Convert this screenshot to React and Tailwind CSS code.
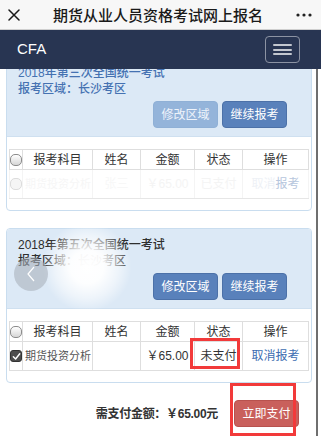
import React from "react";

function BoxCheck({ checked }) {
  if (checked) {
    return (
      <span className="mx-auto flex h-[12px] w-[12px] items-center justify-center rounded-[3px] border border-[#333] bg-[#4d4d4d]">
        <svg width="9" height="9" viewBox="0 0 10 10">
          <path d="M1.5 5.2 L4 7.8 L8.6 2" fill="none" stroke="#fff" strokeWidth="1.6" strokeLinecap="round" strokeLinejoin="round" />
        </svg>
      </span>
    );
  }
  return <span className="mx-auto block h-[12px] w-[12px] rounded-[5px] border border-[#8c8c8c] bg-linear-to-b from-white to-[#d6d6d6]" />;
}

function Table({ faded }) {
  const th = "border border-[#dedede] p-0 font-normal text-[#333] text-center";
  const td = faded
    ? "border-y border-[#e6e6e6] border-x border-x-[#f4f4f4] p-0 text-center"
    : "border border-[#dedede] p-0 text-center";
  return (
    <table className="w-[299px] table-fixed border-collapse text-[12px] leading-none">
      <colgroup>
        <col className="w-[13px]" />
        <col className="w-[70px]" />
        <col className="w-[48px]" />
        <col className="w-[54px]" />
        <col className="w-[48px]" />
        <col className="w-[66px]" />
      </colgroup>
      <thead>
        <tr className="h-[20px]">
          <th className={th}>
            <BoxCheck />
          </th>
          <th className={th}>报考科目</th>
          <th className={th}>姓名</th>
          <th className={th}>金额</th>
          <th className={th}>状态</th>
          <th className={th}>操作</th>
        </tr>
      </thead>
      <tbody>
        <tr className="h-[29px]">
          <td className={td}>
            {faded ? (
              <span className="mx-auto block h-[12px] w-[12px] rounded-[5px] border border-[#dcdcdc] bg-[#f5f5f5]" />
            ) : (
              <BoxCheck checked />
            )}
          </td>
          <td className={td + " overflow-hidden whitespace-nowrap text-left"}>
            <span className={"pl-[2px] text-[11px] " + (faded ? "text-[#f6f6f6]" : "text-[#555]")}>期货投资分析</span>
          </td>
          <td className={td}>
            <span className="text-[#f7f7f7]">{faded ? "张三" : ""}</span>
          </td>
          <td className={td}>
            <span className={faded ? "text-[#f4f4f4]" : "text-[#333]"}>￥65.00</span>
          </td>
          <td className={td}>
            <span className={faded ? "text-[#f4f4f4]" : "text-[#333]"}>{faded ? "已支付" : "未支付"}</span>
          </td>
          <td className={td}>
            {faded ? (
              <span>
                <span className="text-[#eef1f6]">取消</span>
                <span className="text-[#b6c6dd]">报考</span>
              </span>
            ) : (
              <span className="text-[#3d6db1]">取消报考</span>
            )}
          </td>
        </tr>
      </tbody>
    </table>
  );
}

function Card({ first }) {
  const textColor = first ? "text-[#4572b2]" : "text-[#2e2e2e]";
  return (
    <div className="w-[306px] overflow-hidden rounded-[4px] border border-[#c9ddef] bg-white">
      <div className="border-b border-[#cfe0f0] bg-[#dce9f6] pb-[8px] pl-[11px] pr-[24px] pt-[8px]">
        <div className={"text-[12px] font-medium leading-[16px] " + textColor}>
          {first ? "2018年第三次全国统一考试" : "2018年第五次全国统一考试"}
        </div>
        <div className={"text-[12px] font-medium leading-[16px] " + textColor}>报考区域：长沙考区</div>
        <div className="mt-[4px] flex justify-end gap-[4px]">
          <button
            className={
              "flex h-[27px] w-[65px] items-center justify-center rounded-[4px] border text-[12px] " +
              (first ? "border-[#8fb0d6] bg-[#94b4da] text-[#eef3fa]" : "border-[#4c71a8] bg-[#5981bb] text-white")
            }
          >
            修改区域
          </button>
          <button className="flex h-[27px] w-[65px] items-center justify-center rounded-[4px] border border-[#4c71a8] bg-[#5981bb] text-[12px] text-white">
            继续报考
          </button>
        </div>
      </div>
      <div className="px-[2px] pb-[11px] pt-[12px]">
        <Table faded={first} />
      </div>
    </div>
  );
}

export default function App() {
  return (
    <div className="relative h-[436px] w-[321px] overflow-hidden bg-white font-['Liberation_Sans','Noto_Sans_CJK_SC',sans-serif]">
      {/* top bar */}
      <div className="relative z-20 flex h-[30px] items-center border-b border-[#cfcfcf] bg-[#f7f7f7]">
        <svg className="ml-[8px]" width="12" height="12" viewBox="0 0 12 12">
          <path d="M1 1 L11 11 M11 1 L1 11" stroke="#1a1a1a" strokeWidth="1.5" strokeLinecap="round" />
        </svg>
        <div className="ml-[33px] text-[15px] font-medium leading-none text-[#1a1a1a] font-['Noto_Sans_CJK_SC',sans-serif]">
          期货从业人员资格考试网上报名
        </div>
        <svg className="ml-auto mr-[9px]" width="16" height="4" viewBox="0 0 16 4">
          <circle cx="2" cy="2" r="1.6" fill="#222" />
          <circle cx="8" cy="2" r="1.6" fill="#222" />
          <circle cx="14" cy="2" r="1.6" fill="#222" />
        </svg>
      </div>
      {/* navbar */}
      <div className="relative z-10 flex h-[39px] items-center justify-between bg-[#283552] pl-[17px] pr-[21px]">
        <span className="text-[15px] text-white">CFA</span>
        <div className="flex h-[27px] w-[35px] flex-col items-center justify-center gap-[2.5px] rounded-[4px] border border-[#8c93a3]">
          <span className="block h-[2px] w-[19px] rounded bg-[#c3c7cf]" />
          <span className="block h-[2px] w-[19px] rounded bg-[#c3c7cf]" />
          <span className="block h-[2px] w-[19px] rounded bg-[#c3c7cf]" />
        </div>
      </div>
      {/* body */}
      <div className="-mt-[13px] flex">
        <div className="w-[316px]">
          <div className="flex flex-col gap-[17px] pl-[6px]">
            <Card first />
            <Card />
          </div>
          <div className="mt-[17px] flex items-center justify-end pr-[17px]">
            <span className="text-[12px] font-bold tracking-[-0.3px] text-[#333]">需支付金额：￥65.00元</span>
            <button className="ml-[16px] flex h-[27px] w-[65px] items-center justify-center rounded-[4px] border border-[#b8524e] bg-[#c9605c] text-[12px] text-white">
              立即支付
            </button>
          </div>
        </div>
        <div className="h-[450px] w-[2px] bg-[#6f6f6f]" />
      </div>

      {/* privacy blur */}
      <div
        className="pointer-events-none absolute left-[42px] top-[222px] h-[90px] w-[90px] rounded-full"
        style={{
          background:
            "radial-gradient(circle, rgba(255,255,255,1) 0%, rgba(255,255,255,0.95) 26%, rgba(255,255,255,0.5) 50%, rgba(255,255,255,0) 70%)",
        }}
      />
      {/* back circle */}
      <div className="absolute left-[14px] top-[257px] flex h-[34px] w-[34px] items-center justify-center rounded-full bg-[#aab2bc]/60">
        <svg width="10" height="16" viewBox="0 0 10 16">
          <path d="M8 1 L2 8 L8 15" fill="none" stroke="#fff" strokeWidth="1.2" />
        </svg>
      </div>
      {/* annotation boxes */}
      <div className="absolute left-[190px] top-[338px] h-[31px] w-[50px] border-[3px] border-[#f23a3a]" />
      <div className="absolute left-[230px] top-[383px] h-[53px] w-[66px] border-[3px] border-[#f23a3a]" />
    </div>
  );
}
